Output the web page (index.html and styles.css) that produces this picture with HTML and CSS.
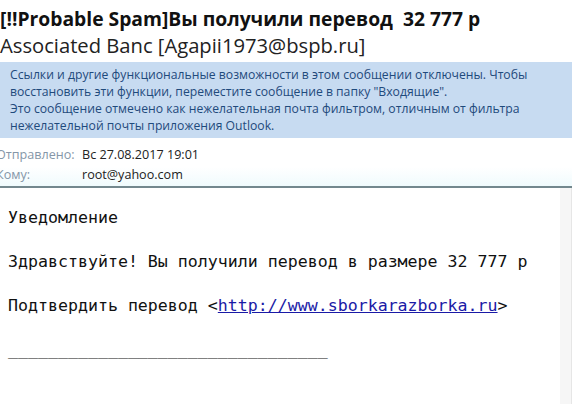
FILE: index.html
```html
<!DOCTYPE html>
<html lang="ru">
<head>
    <meta charset="UTF-8">
    <title>[!!Probable Spam]Вы получили перевод 32 777 р</title>
    <link rel="stylesheet" href="styles.css">
</head>
<body>

<!-- заголовок письма -->
<div class="subject">[!!Probable Spam]Вы получили перевод&nbsp; 32 777 р</div>
<div class="sender">Associated Banc [Agapii1973@bspb.ru]</div>

<!-- предупреждение о спаме -->
<div class="info-bar">
    Ссылки и другие функциональные возможности в этом сообщении отключены. Чтобы<br>
    восстановить эти функции, переместите сообщение в папку "Входящие".<br>
    Это сообщение отмечено как нежелательная почта фильтром, отличным от фильтра<br>
    нежелательной почты приложения Outlook.
</div>

<!-- поля письма -->
<div class="headers">
    <div class="header-row">
        <span class="label">Отправлено:</span>
        <span class="value">Вс 27.08.2017 19:01</span>
    </div>
    <div class="header-row">
        <span class="label">Кому:</span>
        <span class="value">root@yahoo.com</span>
    </div>
</div>

<!-- текст письма -->
<div class="body-wrap">
    <div class="message">
        <p>Уведомление</p>
        <p>Здравствуйте! Вы получили перевод в размере 32 777 р</p>
        <p>Подтвердить перевод &lt;<a href="#">http://www.sborkarazborka.ru</a>&gt;</p>
        <p>________________________________</p>
    </div>
    <div class="scroll-strip"></div>
</div>

</body>
</html>
```

FILE: styles.css
```css
/* общие настройки */
body {
    margin: 0;
    padding: 0;
    background: #fff;
    font-family: 'Open Sans', 'Noto Sans', sans-serif;
    color: #1a1a1a;
    overflow: hidden;
}

/* тема и отправитель */
.subject {
    font-size: 19.3px;
    font-weight: bold;
    line-height: 26px;
    padding-top: 6px;
    white-space: nowrap;
    color: #111;
}

.sender {
    font-size: 20.2px;
    line-height: 26px;
    color: #222;
    white-space: nowrap;
}

/* синяя плашка */
.info-bar {
    margin-top: 4px;
    background-color: #c7dbf1;
    color: #1f4a7c;
    font-size: 12.2px;
    line-height: 17px;
    padding: 4px 0 4px 10px;
    white-space: nowrap;
}

/* поля Отправлено / Кому */
.headers {
    padding: 7px 0 1px 0;
    background: linear-gradient(#fff 60%, #f0fbfd);
    border-bottom: 2px solid #73888e;
    font-size: 12.6px;
}

.header-row {
    display: flex;
    line-height: 20px;
}

.label {
    width: 82px;
    margin-left: -4px;
    padding-right: 4px;
    color: #8596a8;
}

.value {
    color: #222;
}

/* тело письма */
.body-wrap {
    display: flex;
    height: 230px;
}

.message {
    flex: 1;
    padding: 19px 0 0 8px;
    font-family: 'DejaVu Sans Mono', monospace;
    font-size: 16.6px;
    line-height: 22px;
    color: #111;
}

.message p {
    margin: 0 0 22px 0;
    white-space: nowrap;
}

.message a {
    color: #1a1aa6;
    text-decoration: underline;
}

.scroll-strip {
    width: 11px;
    background: #f6f6f6;
    border-right: 1px solid #e6e6e6;
}
```
